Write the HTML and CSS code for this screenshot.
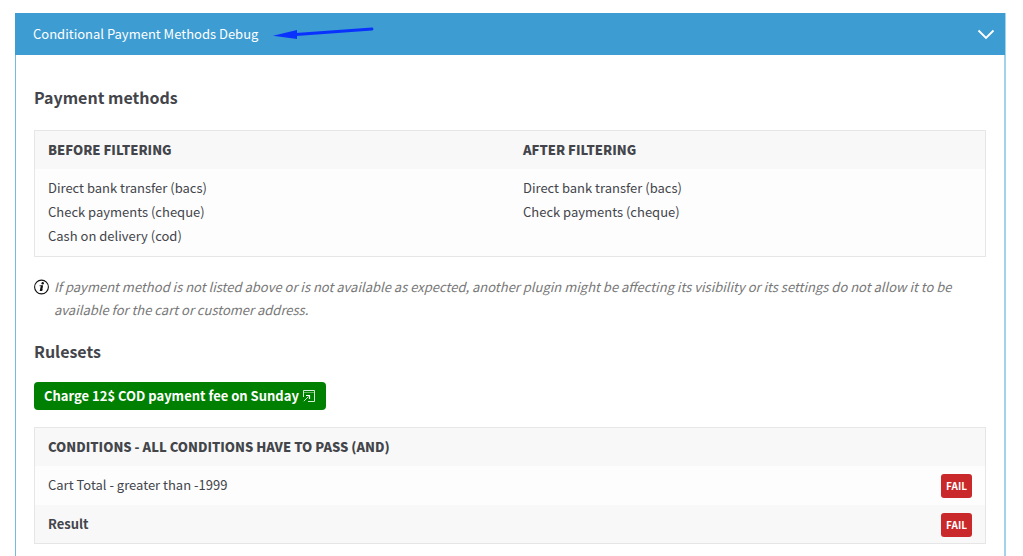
FILE: index.html
```html
<!DOCTYPE html>
<html lang="en">
<head>
<meta charset="utf-8">
<title>Conditional Payment Methods Debug</title>
<link rel="stylesheet" href="styles.css">
</head>
<body>
<main class="debug">
  <header class="debug-header">
    <div class="debug-title">
      <span>Conditional Payment Methods Debug</span>
      <svg class="arrow" width="102" height="16" viewBox="0 0 102 16" aria-hidden="true">
        <path d="M23 8.500 99 3" stroke="#0a32ff" stroke-width="2.800" stroke-linecap="round"/>
        <path d="M0 9.700 24 4v9z" fill="#0a32ff"/>
      </svg>
    </div>
    <button class="toggle" type="button" aria-label="Toggle debug panel">
      <svg width="18" height="12" viewBox="0 0 18 12" fill="none" aria-hidden="true">
        <path d="M1.500 2.500 9 10l7.500-7.500" stroke="#fff" stroke-width="1.900"/>
      </svg>
    </button>
  </header>
  <div class="debug-body">
    <h3 class="heading">Payment methods</h3>
    <table class="table methods">
      <thead>
        <tr><th scope="col">BEFORE FILTERING</th><th scope="col">AFTER FILTERING</th></tr>
      </thead>
      <tbody>
        <tr>
          <td><ul class="list"><li>Direct bank transfer (bacs)</li><li>Check payments (cheque)</li><li>Cash on delivery (cod)</li></ul></td>
          <td><ul class="list"><li>Direct bank transfer (bacs)</li><li>Check payments (cheque)</li></ul></td>
        </tr>
      </tbody>
    </table>
    <div class="note">
      <svg class="note-icon" width="16" height="16" viewBox="0 0 16 16" aria-hidden="true">
        <circle cx="7.500" cy="8" r="6.900" fill="none" stroke="#111" stroke-width="1.100"/>
        <circle cx="8.700" cy="4.300" r="1.200" fill="#111"/>
        <path d="M5.500 6.700h3L7.300 11.500l1.700-.9" fill="none" stroke="#111" stroke-width=".8"/>
        <path d="M6.900 6.500h2.100L7.800 12H5.700z" fill="#111"/>
      </svg>
      <p class="note-text">If payment method is not listed above or is not available as expected, another plugin might be affecting its visibility or its settings do not allow it to be available for the cart or customer address.</p>
    </div>
    <h3 class="heading">Rulesets</h3>
    <a class="ruleset" href="#">
      <span>Charge 12$ COD payment fee on Sunday</span>
      <svg width="12" height="12" viewBox="0 0 12 12" fill="none" stroke="#fff" aria-hidden="true">
        <path d="M.5 7V.5h11v11H5" stroke-opacity=".85"/>
        <path d="M1 2.500h10" stroke-opacity=".4"/>
        <path d="M.8 11.200 5.500 6.500" stroke-opacity=".8"/>
        <path d="M3 5.500h3.500V9" stroke-width="1.200"/>
      </svg>
    </a>
    <table class="table conditions">
      <thead>
        <tr><th scope="col" colspan="2">CONDITIONS - ALL CONDITIONS HAVE TO PASS (AND)</th></tr>
      </thead>
      <tbody>
        <tr><td>Cart Total - greater than -1999</td><td class="status"><span class="badge">FAIL</span></td></tr>
      </tbody>
      <tfoot>
        <tr><th scope="row">Result</th><td class="status"><span class="badge">FAIL</span></td></tr>
      </tfoot>
    </table>
  </div>
</main>
</body>
</html>
```
FILE: styles.css
```css
* {
  box-sizing: border-box;
}

body {
  margin: 0;
  padding: 13px 17px 0 15px;
  background: #fff;
  color: #43454b;
  font: 13px/24px "Noto Sans CJK SC", "Open Sans", sans-serif;
  overflow: hidden;
}

.debug {
  border: solid #a3d2ea;
  border-width: 0 2px 1px 1px;
  border-left-color: #77bae0;
}

.debug-header {
  display: flex;
  align-items: center;
  justify-content: space-between;
  height: 42px;
  margin: 0 -1px;
  padding: 0 10px 0 18px;
  background: #3d9cd2;
  color: #fff;
}

.debug-title {
  display: flex;
  align-items: center;
  gap: 15px;
}

.toggle {
  display: flex;
  padding: 0;
  border: 0;
  background: none;
  cursor: pointer;
}

.debug-body {
  padding: 30px 18px 32px;
}

.heading {
  margin: 0 0 21px;
  font-size: 16px;
  line-height: 24px;
  font-weight: 700;
}

.table {
  width: 100%;
  border: 1px solid #e6e6e6;
  border-spacing: 0;
  background: #fdfdfd;
}

.table th {
  padding: 7px 13px;
  background: #f8f8f8;
  text-align: left;
  font-weight: 700;
}

.table thead th {
  font-weight: 900;
}

.table td {
  padding: 7px 13px 8px;
  vertical-align: top;
}

.methods {
  table-layout: fixed;
}

.list {
  margin: 0;
  padding: 0;
  list-style: none;
}

.note {
  display: flex;
  gap: 4px;
  margin: 18px 0;
}

.note-icon {
  flex: none;
  margin-top: 4px;
}

.note-text {
  margin: 0;
  color: #777;
  font-style: italic;
  line-height: 23px;
}

.ruleset {
  display: inline-flex;
  align-items: center;
  gap: 4px;
  height: 28px;
  margin: -2px 0 17px;
  padding: 0 11px 0 10px;
  border-radius: 4px;
  background: #008000;
  color: #fff;
  font-weight: 700;
  text-decoration: none;
  vertical-align: top;
}

.conditions tfoot td {
  background: #f8f8f8;
}

.table .status {
  padding-top: 8px;
  padding-bottom: 6px;
  text-align: right;
}

.badge {
  display: inline-block;
  padding: 0 5px;
  border-radius: 3px;
  background: #c9292b;
  color: #fff;
  font-size: 10px;
  font-weight: 700;
  vertical-align: top;
}
```
